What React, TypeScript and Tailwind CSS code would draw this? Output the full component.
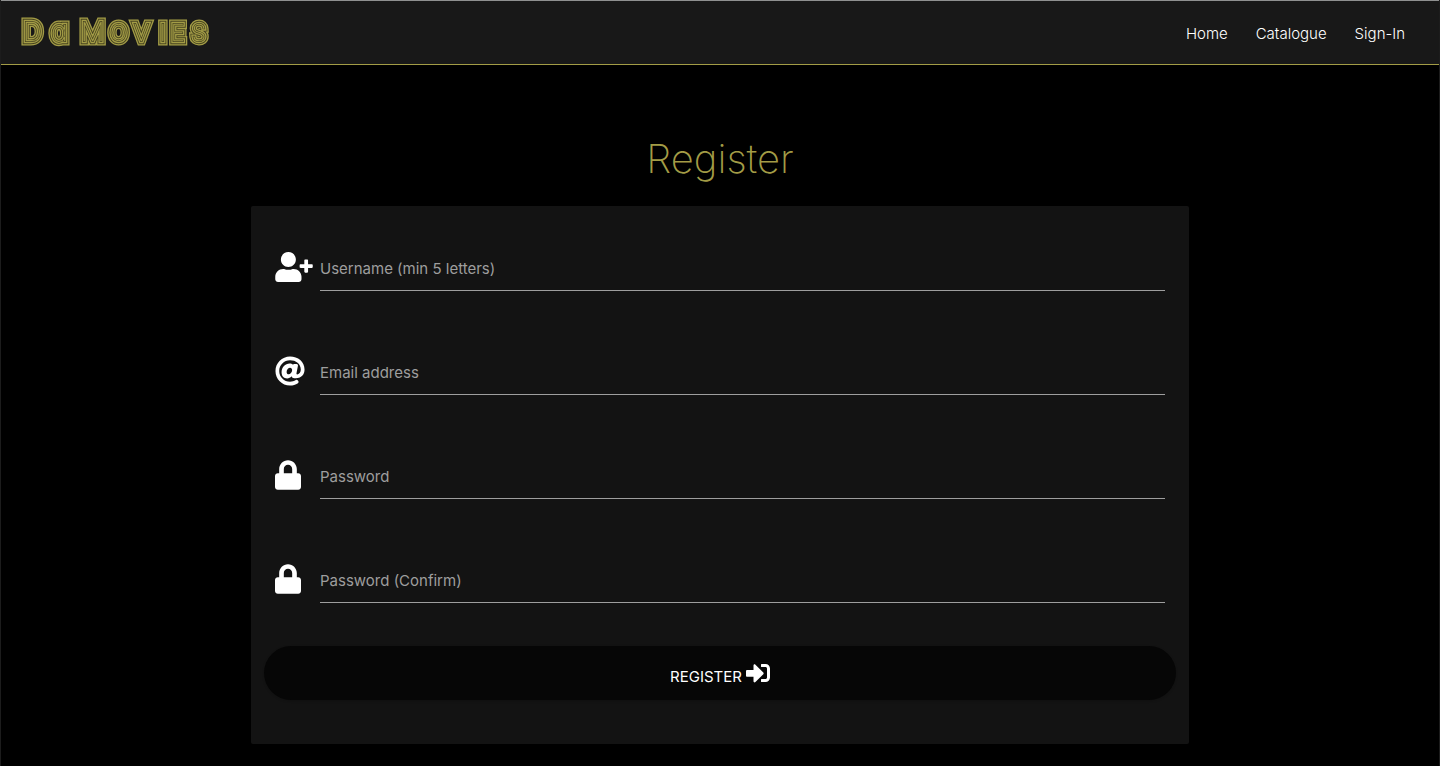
import { FaAt, FaLock, FaSignInAlt, FaUserPlus } from "react-icons/fa";
import type { IconType } from "react-icons";

type Field = {
  id: string;
  label: string;
  type: string;
  icon: IconType;
  iconClass: string;
};

const fields: Field[] = [
  { id: "username", label: "Username (min 5 letters)", type: "text", icon: FaUserPlus, iconClass: "h-[30px] w-[38px]" },
  { id: "email", label: "Email address", type: "email", icon: FaAt, iconClass: "h-[30px] w-[30px]" },
  { id: "password", label: "Password", type: "password", icon: FaLock, iconClass: "h-[30px] w-[26px]" },
  { id: "confirm", label: "Password (Confirm)", type: "password", icon: FaLock, iconClass: "h-[30px] w-[26px]" },
];

const links = ["Home", "Catalogue", "Sign-In"];

function Logo() {
  return (
    <svg
      viewBox="0 0 192 32"
      className="h-8 w-48 overflow-visible will-change-transform"
      role="img"
      aria-label="Da Movies"
      fill="none"
      strokeMiterlimit="2"
    >
      <g stroke="#a39c46" strokeWidth="9">
        <text
          id="wordmark"
          className="[font-feature-settings:'cv11']"
          fontFamily="Inter, sans-serif"
          fontWeight="100"
          fontSize="26"
          x="2 30 60 89 113 139 150 171"
          y="24"
        >
          D<tspan fontSize="29">a</tspan>M<tspan fontSize="23">OVIES</tspan>
        </text>
      </g>
      <use href="#wordmark" stroke="#46431f" strokeWidth="6.4" />
      <use href="#wordmark" stroke="#a39c46" strokeWidth="4.6" />
      <use href="#wordmark" stroke="#46431f" strokeWidth="2" />
      <use href="#wordmark" stroke="#a39c46" strokeWidth="0.6" />
    </svg>
  );
}

function Header() {
  return (
    <header className="flex h-[65px] items-center justify-between border-t border-b border-t-[#8f9090] border-b-[#a39c46] bg-[#181818] px-5">
      <a href="#home">
        <Logo />
      </a>
      <nav className="flex pt-1">
        {links.map((link) => (
          <a key={link} href={"#" + link.toLowerCase()} className="px-[14px] text-[15px] font-light text-white">
            {link}
          </a>
        ))}
      </nav>
    </header>
  );
}

function FieldRow({ field }: { field: Field }) {
  const Icon = field.icon;
  return (
    <div className="flex h-12">
      <label htmlFor={field.id} className="w-[45px] shrink-0 pt-[9px] text-white">
        <Icon className={field.iconClass} aria-hidden="true" />
      </label>
      <input
        id={field.id}
        type={field.type}
        placeholder={field.label}
        aria-label={field.label}
        className="w-full min-w-0 border-b border-[#9e9e9e] bg-transparent pt-1.5 text-[15px] text-white outline-none placeholder:text-[#9e9e9e]"
      />
    </div>
  );
}

export default function App() {
  return (
    <div className="min-h-screen border-x border-[#1c1c1c] bg-black font-[Inter,sans-serif]">
      <Header />
      <main className="mx-auto max-w-[938px] pb-[22px]">
        <h1 className="pt-[66px] pb-[19px] text-center text-[40px] leading-[56px] font-extralight text-[#a39c46]">
          Register
        </h1>
        <form className="rounded-xs bg-[#131313] px-[13px] pt-[37px] pb-11">
          <div className="flex flex-col gap-14 px-[11px]">
            {fields.map((field) => (
              <FieldRow key={field.id} field={field} />
            ))}
          </div>
          <button
            type="button"
            className="mt-[43px] flex h-[54px] w-full items-center justify-center gap-1 rounded-full bg-[#060606] text-[15px] text-white shadow-sm"
          >
            <span className="pt-2">REGISTER</span>
            <FaSignInAlt className="size-6" aria-hidden="true" />
          </button>
        </form>
      </main>
    </div>
  );
}
